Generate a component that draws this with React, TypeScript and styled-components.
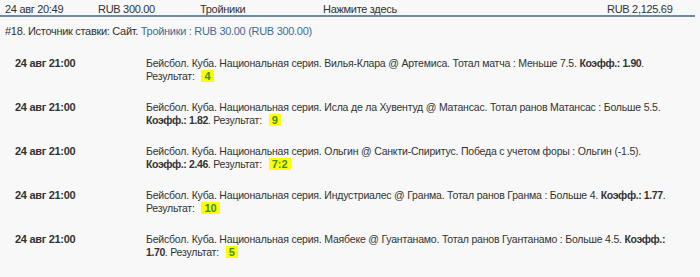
import styled, { createGlobalStyle } from "styled-components"

const Global = createGlobalStyle`
  html, body { margin: 0; padding: 0; background: #f8f8f8; }
  body {
    font-family: "Liberation Sans", Arial, sans-serif;
    font-size: 11px;
    letter-spacing: -0.3px;
    color: #333;
  }
`

const Page = styled.div`
  width: 700px;
  height: 277px;
  overflow: hidden;
`

const TopBar = styled.div`
  display: grid;
  grid-template-columns: 93px 102px 123px 284px 1fr;
  width: 690px;
  padding: 3px 0 0 5px;
  border-bottom: 2px solid #6a8caa;
  line-height: 12px;
`

const Source = styled.div`
  padding: 8px 5px 0;
  line-height: 13px;
`

const Blue = styled.span`
  color: #3f6b99;
`

const List = styled.div`
  padding: 19px 0 0 15px;
`

const Row = styled.div`
  display: grid;
  grid-template-columns: 131px 528px;
  margin-bottom: 18px;
  line-height: 13px;
`

const When = styled.div`
  font-weight: bold;
`

const Text = styled.div`
  font-size: 10.5px;
  letter-spacing: -0.2px;
`

const Odds = styled.b`
  letter-spacing: -0.4px;
`

const Badge = styled.span`
  display: inline-block;
  margin-left: 4px;
  padding: 0 3px;
  line-height: 12px;
  background: #ffff00;
  color: #3a8f2e;
  font-weight: bold;
  font-size: 11px;
  letter-spacing: 0;
`

type Bet = {
  desc: string
  odds: string
  result: string
}

const bets: Bet[] = [
  {
    desc: "Бейсбол. Куба. Национальная серия. Вилья-Клара @ Артемиса. Тотал матча : Меньше 7.5.",
    odds: "1.90",
    result: "4",
  },
  {
    desc: "Бейсбол. Куба. Национальная серия. Исла де ла Хувентуд @ Матансас. Тотал ранов Матансас : Больше 5.5.",
    odds: "1.82",
    result: "9",
  },
  {
    desc: "Бейсбол. Куба. Национальная серия. Ольгин @ Санкти-Спиритус. Победа с учетом форы : Ольгин (-1.5).",
    odds: "2.46",
    result: "7:2",
  },
  {
    desc: "Бейсбол. Куба. Национальная серия. Индустриалес @ Гранма. Тотал ранов Гранма : Больше 4.",
    odds: "1.77",
    result: "10",
  },
  {
    desc: "Бейсбол. Куба. Национальная серия. Маябеке @ Гуантанамо. Тотал ранов Гуантанамо : Больше 4.5.",
    odds: "1.70",
    result: "5",
  },
]

export default function App() {
  return (
    <Page>
      <Global />
      <TopBar>
        <span>24 авг 20:49</span>
        <span>RUB 300.00</span>
        <span>Тройники</span>
        <span>Нажмите здесь</span>
        <span>RUB 2,125.69</span>
      </TopBar>
      <Source>
        #18. Источник ставки: Сайт. <Blue>Тройники : RUB 30.00 (RUB 300.00)</Blue>
      </Source>
      <List>
        {bets.map((bet, i) => (
          <Row key={i}>
            <When>24 авг 21:00</When>
            <Text>
              {bet.desc} <Odds>Коэфф.: {bet.odds}</Odds>. Результат: <Badge>{bet.result}</Badge>
            </Text>
          </Row>
        ))}
      </List>
    </Page>
  )
}
